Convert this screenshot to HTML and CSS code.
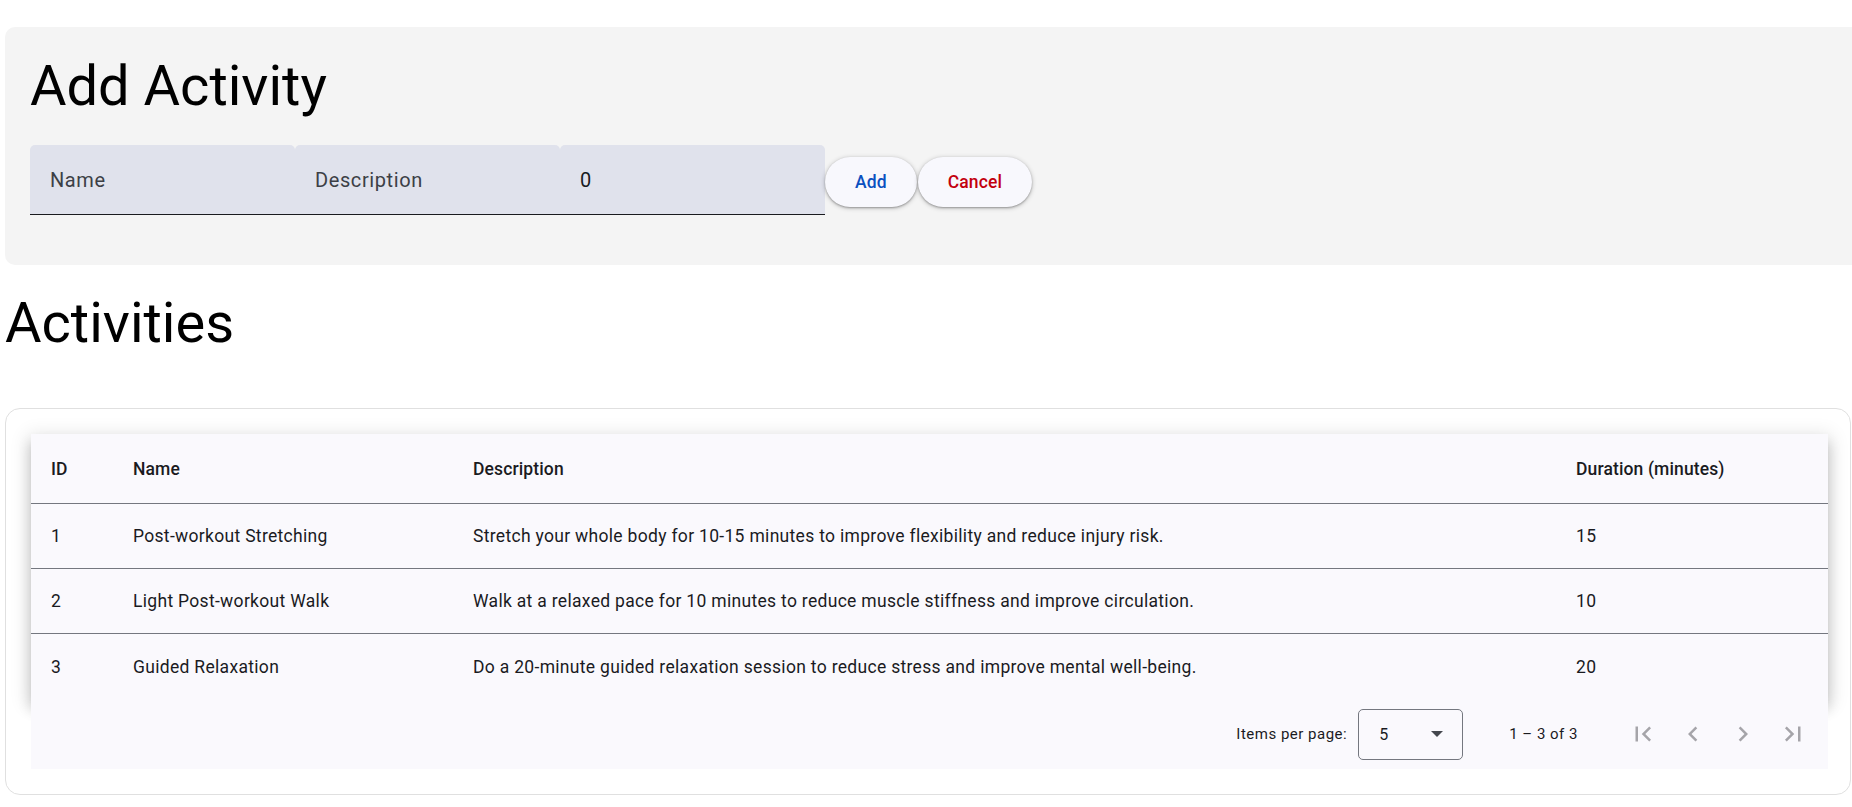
FILE: index.html
```html
<!DOCTYPE html>
<html lang="en">
<head>
<meta charset="utf-8">
<title>Activities</title>
<link rel="stylesheet" href="styles.css">
</head>
<body>
<section class="add-card">
  <h1 class="add-title">Add Activity</h1>
  <div class="form-row">
    <div class="field"><span class="field-label">Name</span></div>
    <div class="field"><span class="field-label">Description</span></div>
    <div class="field"><span class="field-value">0</span></div>
    <button class="btn btn-add">Add</button>
    <button class="btn btn-cancel">Cancel</button>
  </div>
</section>

<h2 class="section-title">Activities</h2>

<section class="table-card">
  <div class="table">
    <div class="row head-row">
      <div class="cell">ID</div>
      <div class="cell">Name</div>
      <div class="cell">Description</div>
      <div class="cell">Duration (minutes)</div>
    </div>
    <div class="row">
      <div class="cell">1</div>
      <div class="cell">Post-workout Stretching</div>
      <div class="cell">Stretch your whole body for 10-15 minutes to improve flexibility and reduce injury risk.</div>
      <div class="cell">15</div>
    </div>
    <div class="row">
      <div class="cell">2</div>
      <div class="cell">Light Post-workout Walk</div>
      <div class="cell">Walk at a relaxed pace for 10 minutes to reduce muscle stiffness and improve circulation.</div>
      <div class="cell">10</div>
    </div>
    <div class="row last-row">
      <div class="cell">3</div>
      <div class="cell">Guided Relaxation</div>
      <div class="cell">Do a 20-minute guided relaxation session to reduce stress and improve mental well-being.</div>
      <div class="cell">20</div>
    </div>
  </div>
  <div class="paginator">
    <span class="pg-label">Items per page:</span>
    <div class="pg-select"><span class="pg-value">5</span><span class="pg-arrow"></span></div>
    <span class="pg-range">1 – 3 of 3</span>
    <button class="icon-btn" aria-label="First page"><svg viewBox="0 0 24 24" class="icon"><path d="M18.41 16.59L13.82 12l4.59-4.59L17 6l-6 6 6 6zM6 6h2v12H6z"/></svg></button>
    <button class="icon-btn" aria-label="Previous page"><svg viewBox="0 0 24 24" class="icon"><path d="M15.41 7.41L14 6l-6 6 6 6 1.41-1.41L10.83 12z"/></svg></button>
    <button class="icon-btn" aria-label="Next page"><svg viewBox="0 0 24 24" class="icon"><path d="M10 6L8.59 7.41 13.17 12l-4.58 4.59L10 18l6-6z"/></svg></button>
    <button class="icon-btn" aria-label="Last page"><svg viewBox="0 0 24 24" class="icon"><path d="M5.59 7.41L10.18 12l-4.59 4.59L7 18l6-6-6-6zM16 6h2v12h-2z"/></svg></button>
  </div>
</section>
</body>
</html>
```

FILE: styles.css
```css
html {
  overflow-x: hidden;
}

body {
  margin: 0;
  font-family: Roboto, "Liberation Sans", Arial, sans-serif;
  color: #1a1b1f;
  background: #ffffff;
}

.add-card {
  margin: 27px -20px 0 5px;
  padding: 26px 25px 25px 25px;
  background: #f4f4f4;
  border-radius: 10px;
}

.add-title {
  margin: 0 0 26px 0;
  font-size: 56px;
  font-weight: 400;
  line-height: normal;
  color: #000;
}

.form-row {
  display: flex;
  align-items: flex-start;
  margin-bottom: 25px;
}

.field {
  box-sizing: border-box;
  width: 265px;
  height: 70px;
  padding: 0 20px;
  display: flex;
  align-items: center;
  background: #e0e2ec;
  border-radius: 5px 5px 0 0;
  border-bottom: 1px solid #1a1b1f;
  font-size: 20px;
  letter-spacing: 0.6px;
}

.field-label {
  color: #3c3f46;
}

.field-value {
  color: #1a1b1f;
}

.btn {
  height: 50px;
  margin: 12px 1px 0 0;
  padding: 0 30px;
  border: none;
  border-radius: 25px;
  background: #f8f8fd;
  font-family: Roboto, "Liberation Sans", Arial, sans-serif;
  font-size: 17.5px;
  font-weight: 500;
  letter-spacing: 0.12px;
  box-shadow: 0 1px 2px rgba(0, 0, 0, 0.3), 0 1px 4px 1px rgba(0, 0, 0, 0.15);
  cursor: pointer;
}

.btn-add {
  color: #0b50c0;
}

.btn-cancel {
  color: #c3000e;
}

.section-title {
  margin: 25px 0 52px 5px;
  font-size: 56px;
  font-weight: 400;
  line-height: normal;
  color: #000;
}

.table-card {
  box-sizing: border-box;
  width: 1846px;
  margin: 0 0 0 5px;
  padding: 25px 22px 25px 25px;
  border: 1px solid #e0e0e0;
  border-radius: 15px;
  background: #fff;
}

.table {
  background: #faf9fd;
  box-shadow: 0 6px 6px -4px rgba(0, 0, 0, 0.2), 0 10px 12px 1px rgba(0, 0, 0, 0.14), 0 4px 18px 3px rgba(0, 0, 0, 0.12);
}

.row {
  box-sizing: border-box;
  display: grid;
  grid-template-columns: 82px 340px 1103px 1fr;
  height: 65px;
  border-bottom: 1px solid #74777f;
  font-size: 17.5px;
  letter-spacing: 0.31px;
}

.head-row {
  height: 70px;
  font-weight: 500;
  letter-spacing: 0.125px;
}

.last-row {
  border-bottom: none;
}

.cell {
  display: flex;
  align-items: center;
  padding: 0 20px;
  white-space: nowrap;
}

.paginator {
  position: relative;
  height: 70px;
  padding-right: 10px;
  display: flex;
  align-items: center;
  justify-content: flex-end;
  background: #faf9fd;
  font-size: 15px;
  letter-spacing: 0.5px;
  color: #1a1b1f;
}

.pg-label {
  margin-right: 11px;
}

.pg-select {
  box-sizing: border-box;
  width: 105px;
  height: 51px;
  padding: 0 19px 0 20px;
  border: 1px solid #74777f;
  border-radius: 5px;
  display: flex;
  align-items: center;
  justify-content: space-between;
  font-size: 16px;
}

.pg-arrow {
  width: 0;
  height: 0;
  border-left: 6.25px solid transparent;
  border-right: 6.25px solid transparent;
  border-top: 6.25px solid #44474e;
}

.pg-range {
  margin: 0 40px 0 46px;
}

.icon-btn {
  width: 50px;
  height: 50px;
  padding: 10px;
  border: none;
  background: transparent;
  display: flex;
  align-items: center;
  justify-content: center;
}

.icon {
  width: 30px;
  height: 30px;
  fill: rgba(26, 27, 31, 0.38);
}
```
